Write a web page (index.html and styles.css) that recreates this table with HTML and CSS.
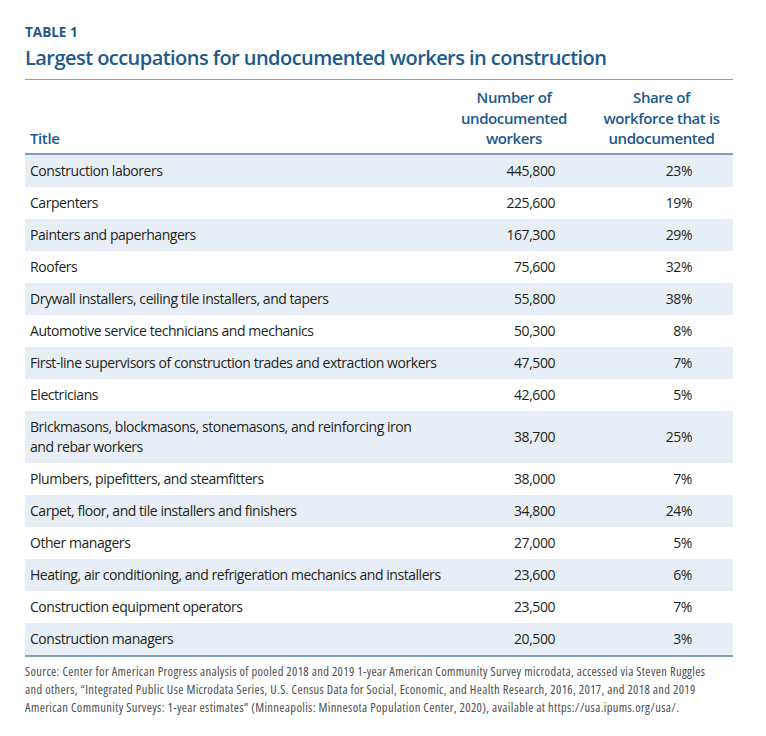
FILE: index.html
```html
<!DOCTYPE html>
<html>
<head>
<meta charset="utf-8">
<link rel="stylesheet" href="styles.css">
</head>
<body>
<div class="wrap">
  <div class="label">TABLE 1</div>
  <h1 class="title">Largest occupations for undocumented workers in construction</h1>
  <table class="tbl">
    <colgroup>
      <col class="c1"><col class="c2"><col class="c3">
    </colgroup>
    <thead>
      <tr>
        <th class="h-title">Title</th>
        <th class="h-num">Number of<br>undocumented<br>workers</th>
        <th class="h-share">Share of<br>workforce that is<br>undocumented</th>
      </tr>
    </thead>
    <tbody>
      <tr class="s"><td>Construction laborers</td><td class="n">445,800</td><td class="p">23%</td></tr>
      <tr><td>Carpenters</td><td class="n">225,600</td><td class="p">19%</td></tr>
      <tr class="s"><td>Painters and paperhangers</td><td class="n">167,300</td><td class="p">29%</td></tr>
      <tr><td>Roofers</td><td class="n">75,600</td><td class="p">32%</td></tr>
      <tr class="s"><td>Drywall installers, ceiling tile installers, and tapers</td><td class="n">55,800</td><td class="p">38%</td></tr>
      <tr><td>Automotive service technicians and mechanics</td><td class="n">50,300</td><td class="p">8%</td></tr>
      <tr class="s"><td>First-line supervisors of construction trades and extraction workers</td><td class="n">47,500</td><td class="p">7%</td></tr>
      <tr><td>Electricians</td><td class="n">42,600</td><td class="p">5%</td></tr>
      <tr class="s tall"><td>Brickmasons, blockmasons, stonemasons, and reinforcing iron<br>and rebar workers</td><td class="n">38,700</td><td class="p">25%</td></tr>
      <tr><td>Plumbers, pipefitters, and steamfitters</td><td class="n">38,000</td><td class="p">7%</td></tr>
      <tr class="s"><td>Carpet, floor, and tile installers and finishers</td><td class="n">34,800</td><td class="p">24%</td></tr>
      <tr><td>Other managers</td><td class="n">27,000</td><td class="p">5%</td></tr>
      <tr class="s"><td>Heating, air conditioning, and refrigeration mechanics and installers</td><td class="n">23,600</td><td class="p">6%</td></tr>
      <tr><td>Construction equipment operators</td><td class="n">23,500</td><td class="p">7%</td></tr>
      <tr class="s"><td>Construction managers</td><td class="n">20,500</td><td class="p">3%</td></tr>
    </tbody>
  </table>
  <p class="source">Source: Center for American Progress analysis of pooled 2018 and 2019 1-year American Community Survey microdata, accessed via Steven Ruggles<br>and others, “Integrated Public Use Microdata Series, U.S. Census Data for Social, Economic, and Health Research, 2016, 2017, and 2018 and 2019<br>American Community Surveys: 1-year estimates” (Minneapolis: Minnesota Population Center, 2020), available at https://usa.ipums.org/usa/.</p>
</div>
</body>
</html>
```
FILE: styles.css
```css
html, body {
  margin: 0;
  padding: 0;
  background: #ffffff;
}
body {
  font-family: "Open Sans", "Liberation Sans", sans-serif;
  color: #231f20;
}
.wrap {
  width: 708px;
  padding: 23px 33px 0 25px;
}
.label {
  font-size: 13.5px;
  font-weight: 700;
  color: #1c5a8c;
  line-height: 18px;
}
.title {
  margin: 3px 0 0 0;
  font-size: 20px;
  font-weight: 600;
  letter-spacing: -0.55px;
  color: #1c5a8c;
  line-height: 27px;
}
.tbl {
  margin-top: 8px;
  width: 708px;
  border-collapse: collapse;
  table-layout: fixed;
  border-top: 1px solid #7f9fba;
  border-bottom: 2px solid #7f9fba;
}
.c1 { width: 425px; }
.c2 { width: 128px; }
.c3 { width: 155px; }
.tbl thead th {
  font-size: 15px;
  font-weight: 600;
  letter-spacing: -0.4px;
  color: #1c5a8c;
  line-height: 20.5px;
  padding: 7px 0 4px 0;
  vertical-align: bottom;
  border-bottom: 2px solid #7f9fba;
}
.h-title { text-align: left; padding-left: 5px !important; }
.h-num { text-align: center; }
.h-share { text-align: center; padding-left: 12px !important; }
.tbl td {
  font-size: 14px;
  letter-spacing: -0.45px;
  line-height: 20px;
  height: 32px;
  padding: 0;
  vertical-align: middle;
}
.tbl td:first-child { padding-left: 5px; }
.tbl tr.tall td { height: 52px; }
.tbl td.n { text-align: right; padding-right: 23px; }
.tbl td.p { text-align: right; padding-right: 41px; }
.tbl tr.s td { background: #e8eef5; }
.source {
  margin: 6px 0 0 0;
  font-size: 12.5px;
  font-stretch: 75%;
  letter-spacing: 0.35px;
  line-height: 18px;
  color: #4d4d4f;
  white-space: nowrap;
}
```
